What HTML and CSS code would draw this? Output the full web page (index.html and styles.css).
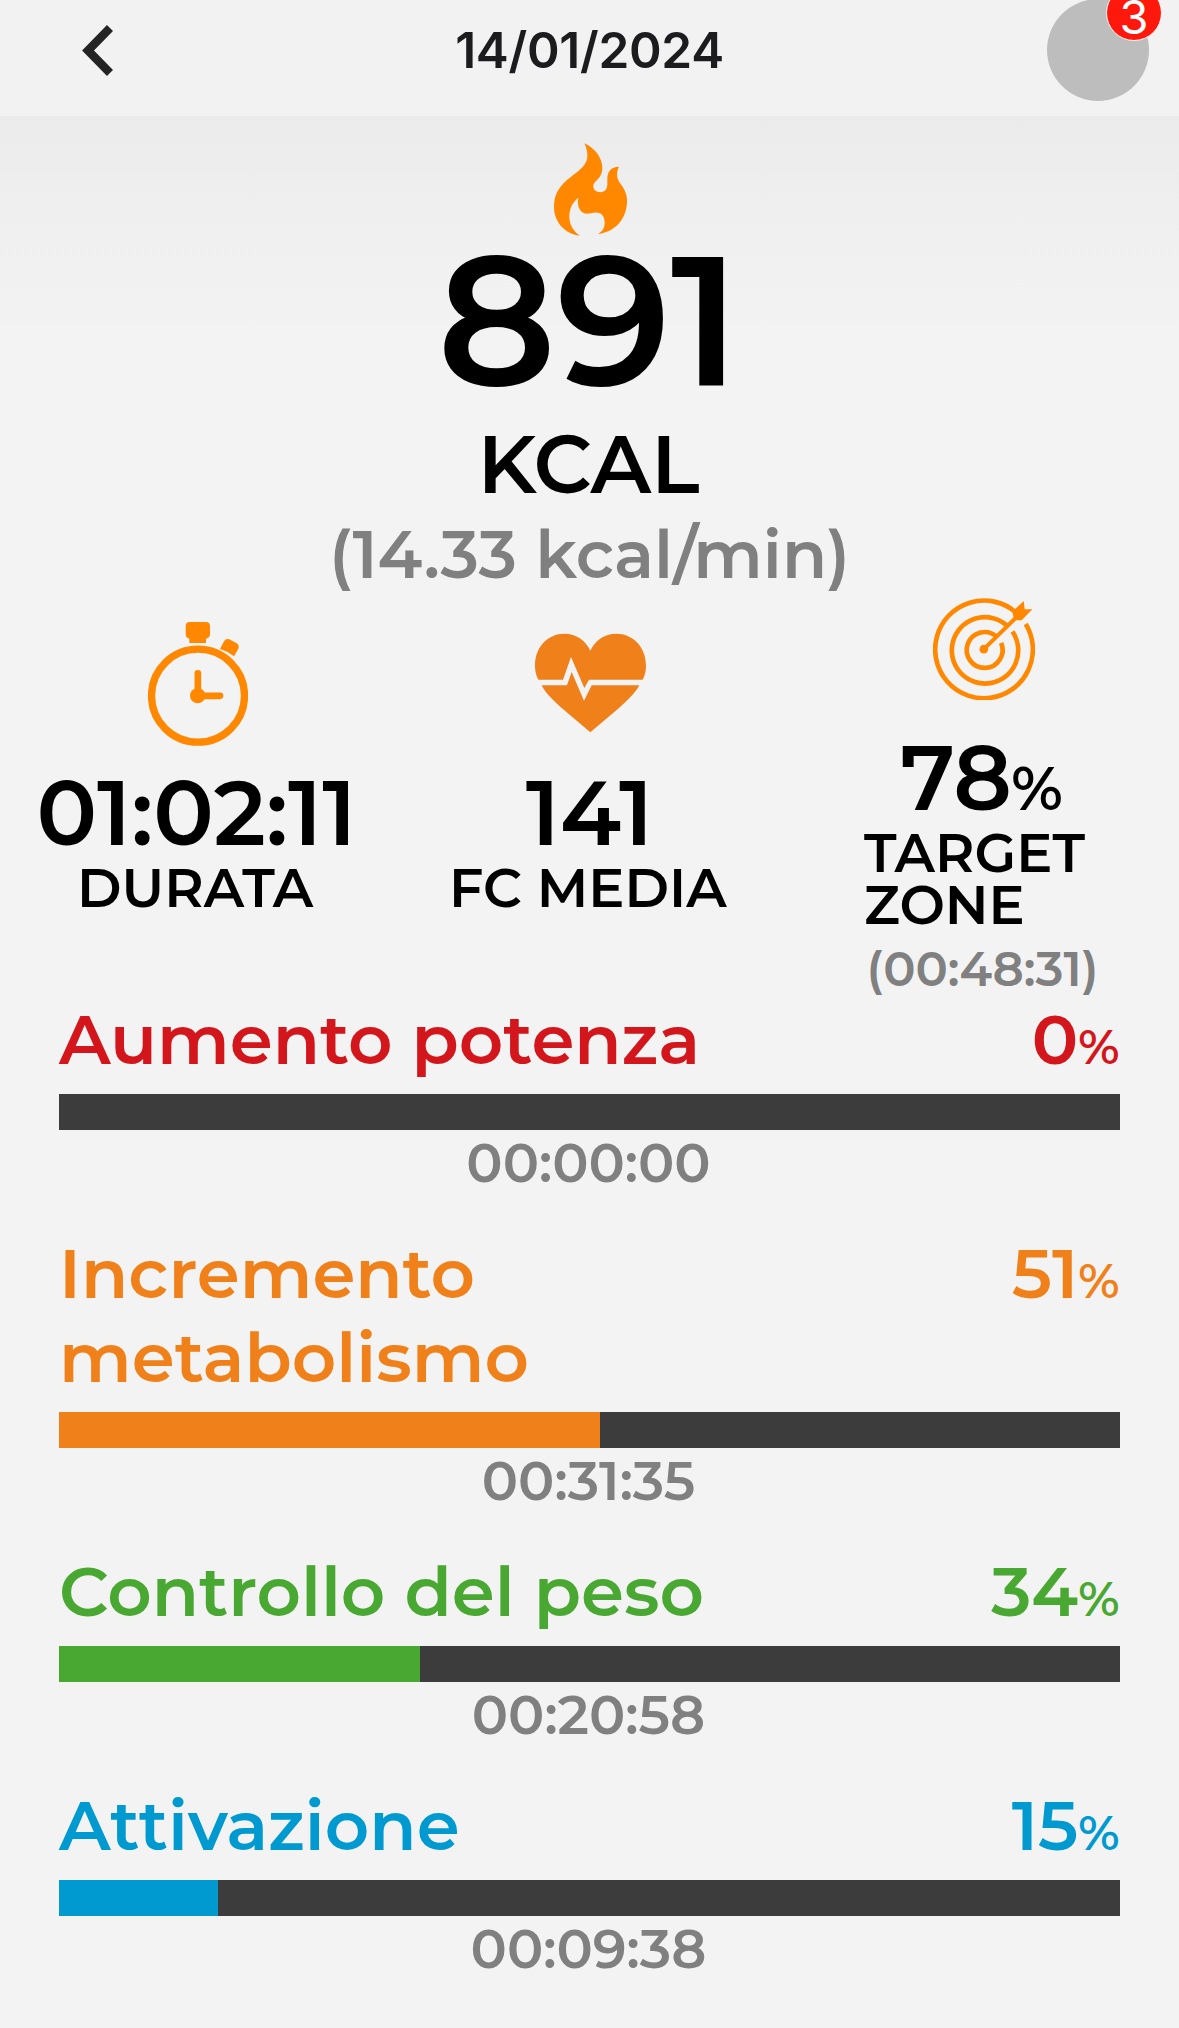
FILE: index.html
```html
<!DOCTYPE html>
<html lang="it">
<head>
  <meta charset="utf-8">
  <title>14/01/2024</title>
  <link rel="stylesheet" href="styles.css">
</head>
<body>
  <header class="topbar">
    <svg class="back" viewBox="0 0 31 51" aria-label="Indietro"><path d="M28 3 6 25.500 28 48" fill="none" stroke="#242424" stroke-width="8.500"/></svg>
    <h1 class="date">14/01/2024</h1>
    <div class="avatar"><span class="badge">3</span></div>
  </header>

  <main class="content">
    <section class="hero">
      <svg class="flame" viewBox="402 41 219 278"><path fill="#ff8800" d="M493 41C525 55 547 85 547 115C547 150 520 153 520 171C520 181 529 188 541 188C553 188 562 180 562 165V150C562 126 572 113 597 112C588 130 589 148 603 165C615 182 621 195 621 214C621 265 590 306 534 314C548 305 554 295 554 280C554 258 543 249 526 249C517 249 510 253 500 253C480 251 470 232 475 205C458 218 448 238 448 262C448 285 460 305 480 319C430 312 402 275 402 232C402 200 412 182 430 162C455 135 502 115 502 80C502 65 500 55 493 41Z"/></svg>
      <div class="kcal-value">891</div>
      <div class="kcal-label">KCAL</div>
      <div class="kcal-rate">(14.33 kcal/min)</div>
    </section>

    <section class="stats">
      <div class="stat">
        <svg class="icon-watch" viewBox="384 66 302 372" fill="#ff8800">
          <circle cx="534" cy="287" r="139.500" fill="none" stroke="#ff8800" stroke-width="22"/>
          <path d="M509 66H558Q570 66 570 79V102Q570 114 558 116V129H508V116Q497 114 497 102V79Q497 66 509 66Z"/>
          <path d="M600 147 612 124Q618 114 628 118L650 130Q659 136 655 146L642 169Q624 154 600 147Z"/>
          <circle cx="533" cy="287" r="23"/>
          <path d="M533.500 287V220M533 287.500H600" stroke="#ff8800" stroke-width="20" stroke-linecap="round"/>
        </svg>
        <div class="value">01:02:11</div>
        <div class="label label-duration">DURATA</div>
      </div>
      <div class="stat">
        <svg class="icon-heart" viewBox="344 66 333 372">
          <path fill="#f0811a" d="M510 152C523 122 552 101 588 101C638 101 677 141 677 197C677 212 674 226 667 239H506L492 264L452 171L428 239H354C347 226 344 212 344 197C344 141 382 101 432 101C468 101 497 122 510 152Z"/>
          <path fill="#f0811a" d="M364 256H440L454 216L491 302L514 256H657C646 277 625 298 596 324L510 397L424 324C395 298 374 277 364 256Z"/>
        </svg>
        <div class="value">141</div>
        <div class="label label-heart">FC MEDIA</div>
      </div>
      <div class="stat stat-target">
        <svg class="icon-target" viewBox="276 53 307 307" fill="none" stroke="#ff8800" stroke-width="14">
          <path d="M555 131A147 147 0 1 1 524 95"/>
          <path d="M515 154A100 100 0 1 1 498 135"/>
          <path d="M481 188A54 54 0 1 1 466 168"/>
          <path d="M429 207 530 108" stroke-width="12"/>
          <path fill="#ff8800" stroke="none" d="M515 94 549 62 552 87H575L543 120H520Z"/>
          <circle cx="429" cy="207" r="13" fill="#ff8800" stroke="none"/>
        </svg>
        <div class="target-value"><span class="target-number">78</span><span class="target-unit">%</span></div>
        <div class="label target-label">TARGET<br>ZONE</div>
        <div class="target-time">(00:48:31)</div>
      </div>
    </section>

    <section class="zones">
      <article class="zone power">
        <div class="zone-head"><h2>Aumento potenza</h2><div class="percent"><span class="number">0</span><span class="unit">%</span></div></div>
        <div class="bar"><div class="fill" style="width:0%"></div></div>
        <div class="time">00:00:00</div>
      </article>
      <article class="zone metabolism">
        <div class="zone-head"><h2>Incremento metabolismo</h2><div class="percent"><span class="number">51</span><span class="unit">%</span></div></div>
        <div class="bar"><div class="fill" style="width:51%"></div></div>
        <div class="time">00:31:35</div>
      </article>
      <article class="zone weight">
        <div class="zone-head"><h2>Controllo del peso</h2><div class="percent"><span class="number">34</span><span class="unit">%</span></div></div>
        <div class="bar"><div class="fill" style="width:34%"></div></div>
        <div class="time">00:20:58</div>
      </article>
      <article class="zone activation">
        <div class="zone-head"><h2>Attivazione</h2><div class="percent"><span class="number">15</span><span class="unit">%</span></div></div>
        <div class="bar"><div class="fill" style="width:15%"></div></div>
        <div class="time">00:09:38</div>
      </article>
    </section>
  </main>
</body>
</html>
```
FILE: styles.css
```css
* { box-sizing: border-box; }

body {
  margin: 0;
  height: 2028px;
  overflow: hidden;
  background: #f3f3f3;
  color: #000;
  font-family: Montserrat, Inter, "Liberation Sans", sans-serif;
  font-weight: 600;
}

h1, h2 { margin: 0; font: inherit; }
svg { display: block; flex: none; }

/* Top bar */
.topbar {
  display: grid;
  grid-template-columns: 132px 1fr 132px;
  grid-template-rows: 100px;
  align-items: center;
  height: 116px;
  background: #f2f2f2;
}
.back { width: 31px; height: 51px; margin-left: 82px; }
.date {
  font-family: Inter, sans-serif;
  font-size: 49.5px;
  font-weight: 600;
  letter-spacing: -0.28px;
  line-height: 60px;
  text-align: center;
  color: #1c1c1e;
}
.avatar {
  position: relative;
  width: 102px;
  height: 102px;
  border-radius: 50%;
  background: #bdbdbd;
}
.badge {
  position: absolute;
  top: -14px;
  right: -13px;
  width: 56px;
  height: 56px;
  border: 1px solid #fff;
  border-radius: 50%;
  background: #ff180c;
  color: #fff;
  font: 400 47px/61px Inter, sans-serif;
  text-align: center;
}

/* Calories */
.content { background: linear-gradient(#ebebeb, #efefef 90px, #f3f3f3 225px); }
.hero {
  display: flex;
  flex-direction: column;
  align-items: center;
  padding-top: 27px;
}
.flame { width: 73px; height: 93px; margin: 0 0 -1px 2px; }
.kcal-value { margin: 0 1.5px 2px 0; font-size: 183px; line-height: 170px; }
.kcal-label { margin-right: 2px; font-size: 81px; line-height: 115px; }
.kcal-rate { font-size: 66px; line-height: 66px; color: #808080; }

/* Summary figures */
.stats { display: grid; grid-template-columns: repeat(3, 1fr); height: 407px; }
.stat { display: flex; flex-direction: column; align-items: center; padding-top: 34px; }
.icon-watch { width: 100.7px; height: 124px; margin-left: 3px; }
.icon-heart { width: 111px; height: 124px; margin-left: 1px; }
.value { margin-top: 22px; font-size: 90px; line-height: 90px; }
.label { margin-top: 4px; font-size: 54px; line-height: 52px; }
.label-duration { margin-right: 2.7px; }
.label-heart { margin-right: 3.3px; }
.stat-target { padding-top: 10px; }
.icon-target { width: 102px; height: 102px; margin-left: 2px; }
.target-value { display: flex; align-items: baseline; margin: 33px 2px 0 0; }
.target-number { font-size: 90px; line-height: 90px; }
.target-unit { margin-left: -0.8px; font-size: 60px; line-height: 60px; }
.target-label { align-self: flex-start; margin-left: 78px; }
.target-time { margin-top: 12px; font-size: 48px; line-height: 52px; color: #808080; }

/* Training zones */
.zones { display: grid; gap: 42px; padding: 2px 59px 0; }
.zone-head { display: flex; justify-content: space-between; color: var(--tone); }
.zone-head h2 { max-width: 700px; font-size: 69px; line-height: 84px; }
.percent { display: flex; align-items: baseline; height: 84px; margin-right: 0.5px; }
.number { font-size: 69px; line-height: 84px; }
.unit { font-size: 48px; line-height: 50px; }
.bar { height: 36px; margin-top: 13px; background: #3c3c3c; }
.fill { height: 100%; background: var(--tone); }
.time { margin: 7px 2px 0 0; font-size: 54px; line-height: 52px; text-align: center; color: #808080; }

.power { --tone: #d3161b; }
.metabolism { --tone: #f0811a; }
.weight { --tone: #49a832; }
.activation { --tone: #0099d0; }
```
